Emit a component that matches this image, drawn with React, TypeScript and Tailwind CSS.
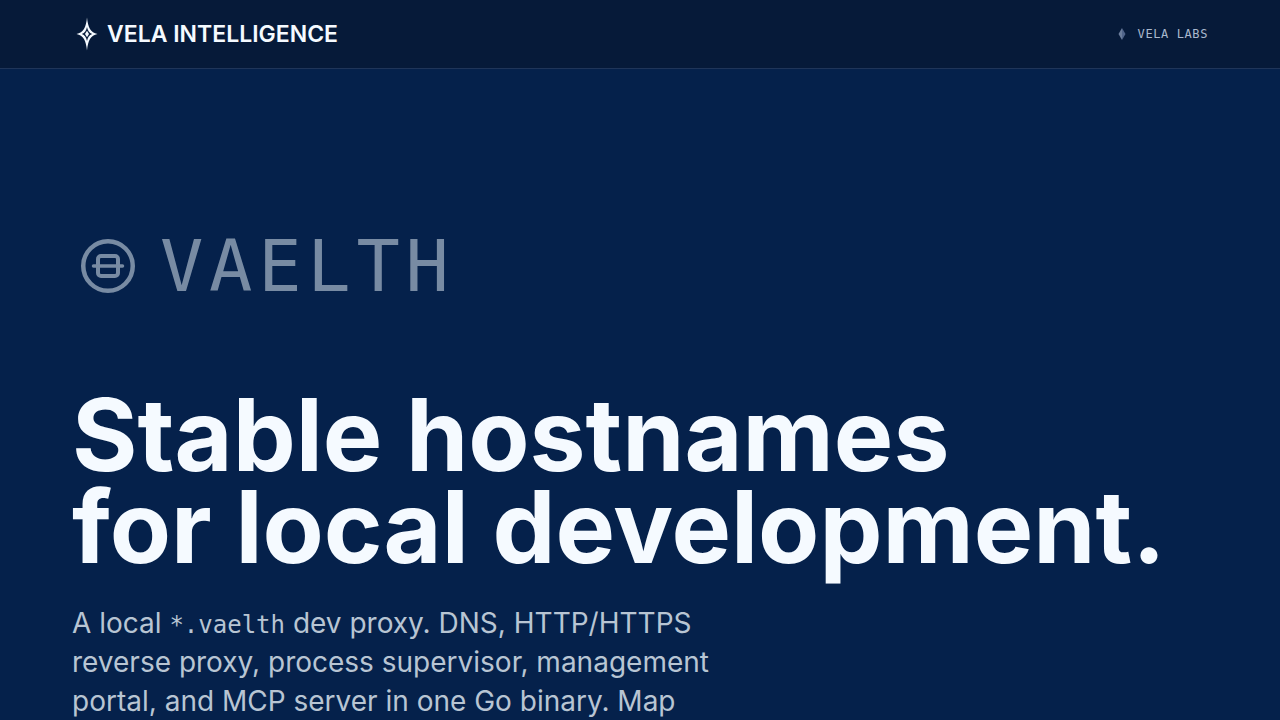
function StarLogo() {
    return (
        <svg
            className="h-9 w-6"
            viewBox="0 0 24 36"
            fill="currentColor"
            aria-hidden="true"
        >
            <path
                fillRule="evenodd"
                d="M12 1.500C13 11.500 15.500 16.500 22.500 18C15.500 19.500 13 24.500 12 34.500C11 24.500 8.500 19.500 1.500 18C8.500 16.500 11 11.500 12 1.500ZM12 11C12.800 14.600 14.200 16.900 17.200 18C14.200 19.100 12.800 21.400 12 25C11.200 21.400 9.800 19.100 6.800 18C9.800 16.900 11.200 14.600 12 11Z"
            />
            <path d="M12 14.800L14 18L12 21.200L10 18Z" />
        </svg>
    );
}

function LabsMark() {
    return (
        <svg
            className="size-4"
            viewBox="0 0 16 16"
            aria-hidden="true"
        >
            <path fill="#6b7d9b" d="M8 2V14L4.500 8Z" />
            <path fill="#51658a" d="M8 2L11.500 8L8 14Z" />
        </svg>
    );
}

function VaelthMark() {
    return (
        <svg
            className="size-[72px]"
            viewBox="0 0 72 72"
            fill="none"
            stroke="currentColor"
            aria-hidden="true"
        >
            <circle cx="36" cy="36" r="24.75" strokeWidth="4.5" />
            <rect x="26" y="26" width="20" height="20" rx="3" strokeWidth="4" />
            <path d="M21.500 36H50.500" strokeWidth="3.500" strokeLinecap="round" />
        </svg>
    );
}

export default function App() {
    return (
        <div
            className="
                min-h-screen
                bg-[#05214b]
                font-['Inter',sans-serif]
                text-[#f5faff]
            "
        >

            {/* Header */}

            <header className="border-b border-[#1f3559] bg-[#061a39]">

                <div className="flex h-[68px] items-center justify-between px-[72px]">

                    <a href="#" className="flex items-center gap-2 pl-[3px]">
                        <StarLogo />
                        <span className="text-[23px] font-semibold">
                            VELA INTELLIGENCE
                        </span>
                    </a>

                    <a
                        href="#"
                        className="
                            flex
                            items-center
                            gap-2
                            font-['DejaVu_Sans_Mono',monospace]
                            text-xs
                            tracking-wider
                            text-[#a9b8cd]
                        "
                    >
                        <LabsMark />
                        VELA LABS
                    </a>

                </div>

            </header>

            {/* Hero */}

            <main className="px-[72px] pt-[161px]">

                <div className="flex items-center gap-4 text-[#788ba3]">
                    <VaelthMark />
                    <span
                        className="
                            font-['DejaVu_Sans_Mono',monospace]
                            text-7xl
                            tracking-[0.08em]
                        "
                    >
                        VAELTH
                    </span>
                </div>

                <h1
                    className="
                        mt-[87px]
                        text-[100px]
                        leading-[92px]
                        font-bold
                    "
                >
                    Stable hostnames
                    <br />
                    for local development.
                </h1>

                <p
                    className="
                        mt-[31px]
                        max-w-[680px]
                        text-[28px]
                        leading-[39px]
                        text-[#b8c5d3]
                    "
                >
                    A local{" "}
                    <code className="font-['DejaVu_Sans_Mono',monospace] text-2xl leading-none">
                        *.vaelth
                    </code>{" "}
                    dev proxy. DNS, HTTP/HTTPS reverse proxy, process
                    supervisor, management portal, and MCP server in one Go
                    binary. Map
                </p>

            </main>

        </div>
    );
}
